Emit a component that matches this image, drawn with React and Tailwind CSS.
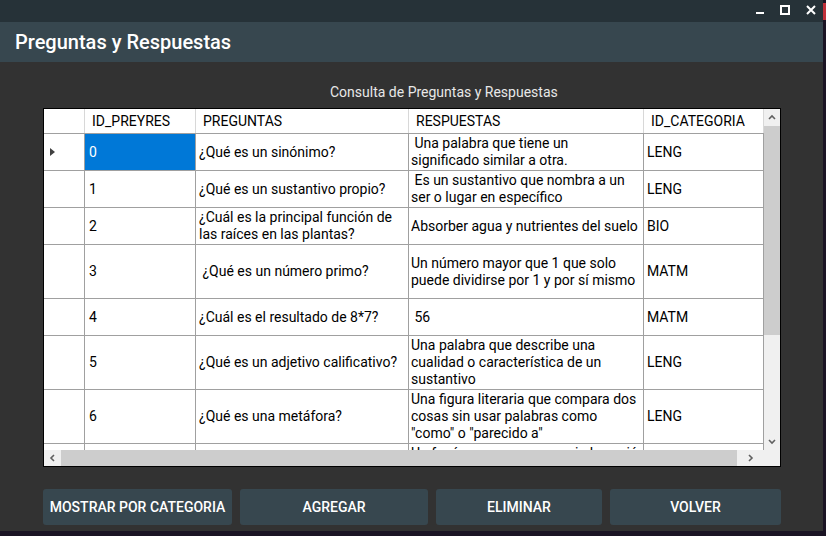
import React from 'react';

const filas = [
  { id: '0', pregunta: '¿Qué es un sinónimo?', respuesta: ' Una palabra que tiene un\nsignificado similar a otra.', cat: 'LENG', h: 'h-[37px]' },
  { id: '1', pregunta: '¿Qué es un sustantivo propio?', respuesta: ' Es un sustantivo que nombra a un\nser o lugar en específico', cat: 'LENG', h: 'h-[37px]' },
  { id: '2', pregunta: '¿Cuál es la principal función de\nlas raíces en las plantas?', respuesta: 'Absorber agua y nutrientes del suelo', cat: 'BIO', h: 'h-[37px]' },
  { id: '3', pregunta: ' ¿Qué es un número primo?', respuesta: 'Un número mayor que 1 que solo\npuede dividirse por 1 y por sí mismo', cat: 'MATM', h: 'h-[54px]' },
  { id: '4', pregunta: '¿Cuál es el resultado de 8*7?', respuesta: ' 56', cat: 'MATM', h: 'h-[37px]' },
  { id: '5', pregunta: '¿Qué es un adjetivo calificativo?', respuesta: 'Una palabra que describe una\ncualidad o característica de un\nsustantivo', cat: 'LENG', h: 'h-[54px]' },
  { id: '6', pregunta: '¿Qué es una metáfora?', respuesta: 'Una figura literaria que compara dos\ncosas sin usar palabras como\n"como" o "parecido a"', cat: 'LENG', h: 'h-[54px]' },
  { id: '7', pregunta: '¿Qué es un fenómeno natural?', respuesta: 'Un fenómeno que ocurre sin la acción\ndel ser humano, como la lluvia\no los terremotos', cat: 'CIEN', h: 'h-[54px]' },
];

const Chevron = ({ dir }) => {
  const paths = {
    up: 'M1 5 L4 2 L7 5',
    down: 'M1 2 L4 5 L7 2',
    left: 'M5 1 L2 4 L5 7',
    right: 'M2 1 L5 4 L2 7',
  };
  return (
    <svg width="8" height="8" viewBox="0 0 8 8">
      <path d={paths[dir]} fill="none" stroke="#606060" strokeWidth="1.6" />
    </svg>
  );
};

const App = () => {
  return (
    <div className="flex h-[536px] w-[826px] bg-[#1b1424]" style={{ fontFamily: 'Roboto, "Liberation Sans", sans-serif' }}>
      <div className="flex h-[531px] w-[823px] flex-col bg-[#323232]">
        {/* Barra de titulo */}
        <div className="flex h-[22px] items-start justify-end gap-[16px] bg-[#263238] pr-[7px] pt-[5px]">
          <div className="mt-[7px] h-[2px] w-[8px] bg-white"></div>
          <div className="h-[10px] w-[10px] border-2 border-white"></div>
          <svg width="10" height="10" viewBox="0 0 10 10">
            <path d="M1 1 L9 9 M9 1 L1 9" stroke="white" strokeWidth="2" />
          </svg>
        </div>

        {/* Encabezado */}
        <div className="flex h-[40px] items-center bg-[#37474f] pl-[15px]">
          <h1 className="text-[20px] font-medium text-white">Preguntas y Respuestas</h1>
        </div>

        <div className="flex flex-1 flex-col pl-[43px]">
          <div className="h-[46px] pl-[287px] pt-[21px] text-[14px] leading-[18px] text-[#e8e8e8]">
            Consulta de Preguntas y Respuestas
          </div>

          {/* Grilla */}
          <div className="flex h-[359px] w-[738px] flex-col border border-black bg-white text-[14px] text-black">
            <div className="flex h-[341px]">
              <div className="w-[720px] overflow-hidden">
                <div className="flex h-[25px] border-b border-[#a0a0a0]">
                  <div className="w-[41px] border-r border-[#d8d8d8]"></div>
                  <div className="flex w-[111px] items-center border-r border-[#d8d8d8] pl-[7px]">ID_PREYRES</div>
                  <div className="flex w-[213px] items-center border-r border-[#d8d8d8] pl-[7px]">PREGUNTAS</div>
                  <div className="flex w-[235px] items-center border-r border-[#d8d8d8] pl-[7px]">RESPUESTAS</div>
                  <div className="flex w-[120px] items-center border-r border-[#d8d8d8] pl-[7px]">ID_CATEGORIA</div>
                </div>
                {filas.map((fila, i) => (
                  <div key={fila.id} className={`flex shrink-0 border-b border-[#a0a0a0] leading-[17px] ${fila.h}`}>
                    <div className="flex w-[41px] items-center border-r border-[#a0a0a0] pl-[6px]">
                      {i === 0 && (
                        <svg width="6" height="8" viewBox="0 0 6 8">
                          <path d="M0 0 L5 4 L0 8 Z" fill="#404040" />
                        </svg>
                      )}
                    </div>
                    <div className={`flex w-[111px] items-center border-r border-[#a0a0a0] pl-[4px] ${i === 0 ? 'bg-[#0078d7] text-white' : ''}`}>
                      {fila.id}
                    </div>
                    <div className="flex w-[213px] items-center overflow-hidden whitespace-pre border-r border-[#a0a0a0] pl-[3px]">
                      {fila.pregunta}
                    </div>
                    <div className="flex w-[235px] items-center overflow-hidden whitespace-pre border-r border-[#a0a0a0] pl-[2px]">
                      {fila.respuesta}
                    </div>
                    <div className="flex w-[120px] items-center border-r border-[#a0a0a0] pl-[3px]">{fila.cat}</div>
                  </div>
                ))}
              </div>
              {/* Scroll vertical */}
              <div className="flex w-[16px] flex-col bg-[#f0f0f0]">
                <div className="flex h-[17px] items-center justify-center">
                  <Chevron dir="up" />
                </div>
                <div className="h-[209px] bg-[#cdcdcd]"></div>
                <div className="flex-1"></div>
                <div className="flex h-[17px] items-center justify-center">
                  <Chevron dir="down" />
                </div>
              </div>
            </div>
            {/* Scroll horizontal */}
            <div className="flex h-[16px] bg-[#f0f0f0]">
              <div className="flex w-[17px] items-center justify-center">
                <Chevron dir="left" />
              </div>
              <div className="w-[676px] bg-[#cdcdcd]"></div>
              <div className="flex w-[27px] items-center justify-center">
                <Chevron dir="right" />
              </div>
            </div>
          </div>

          {/* Botones */}
          <div className="mt-[22px] flex gap-2 text-[14px] font-medium text-white">
            <button className="h-[36px] w-[189px] rounded-[3px] bg-[#37474f]">MOSTRAR POR CATEGORIA</button>
            <button className="h-[36px] w-[188px] rounded-[3px] bg-[#37474f]">AGREGAR</button>
            <button className="h-[36px] w-[166px] rounded-[3px] bg-[#37474f]">ELIMINAR</button>
            <button className="h-[36px] w-[171px] rounded-[3px] bg-[#37474f]">VOLVER</button>
          </div>
        </div>
      </div>
      <div className="flex w-[3px] flex-col">
        <div className="mt-[3px] h-[17px] bg-[#c0303a]"></div>
      </div>
    </div>
  );
};

export default App;
